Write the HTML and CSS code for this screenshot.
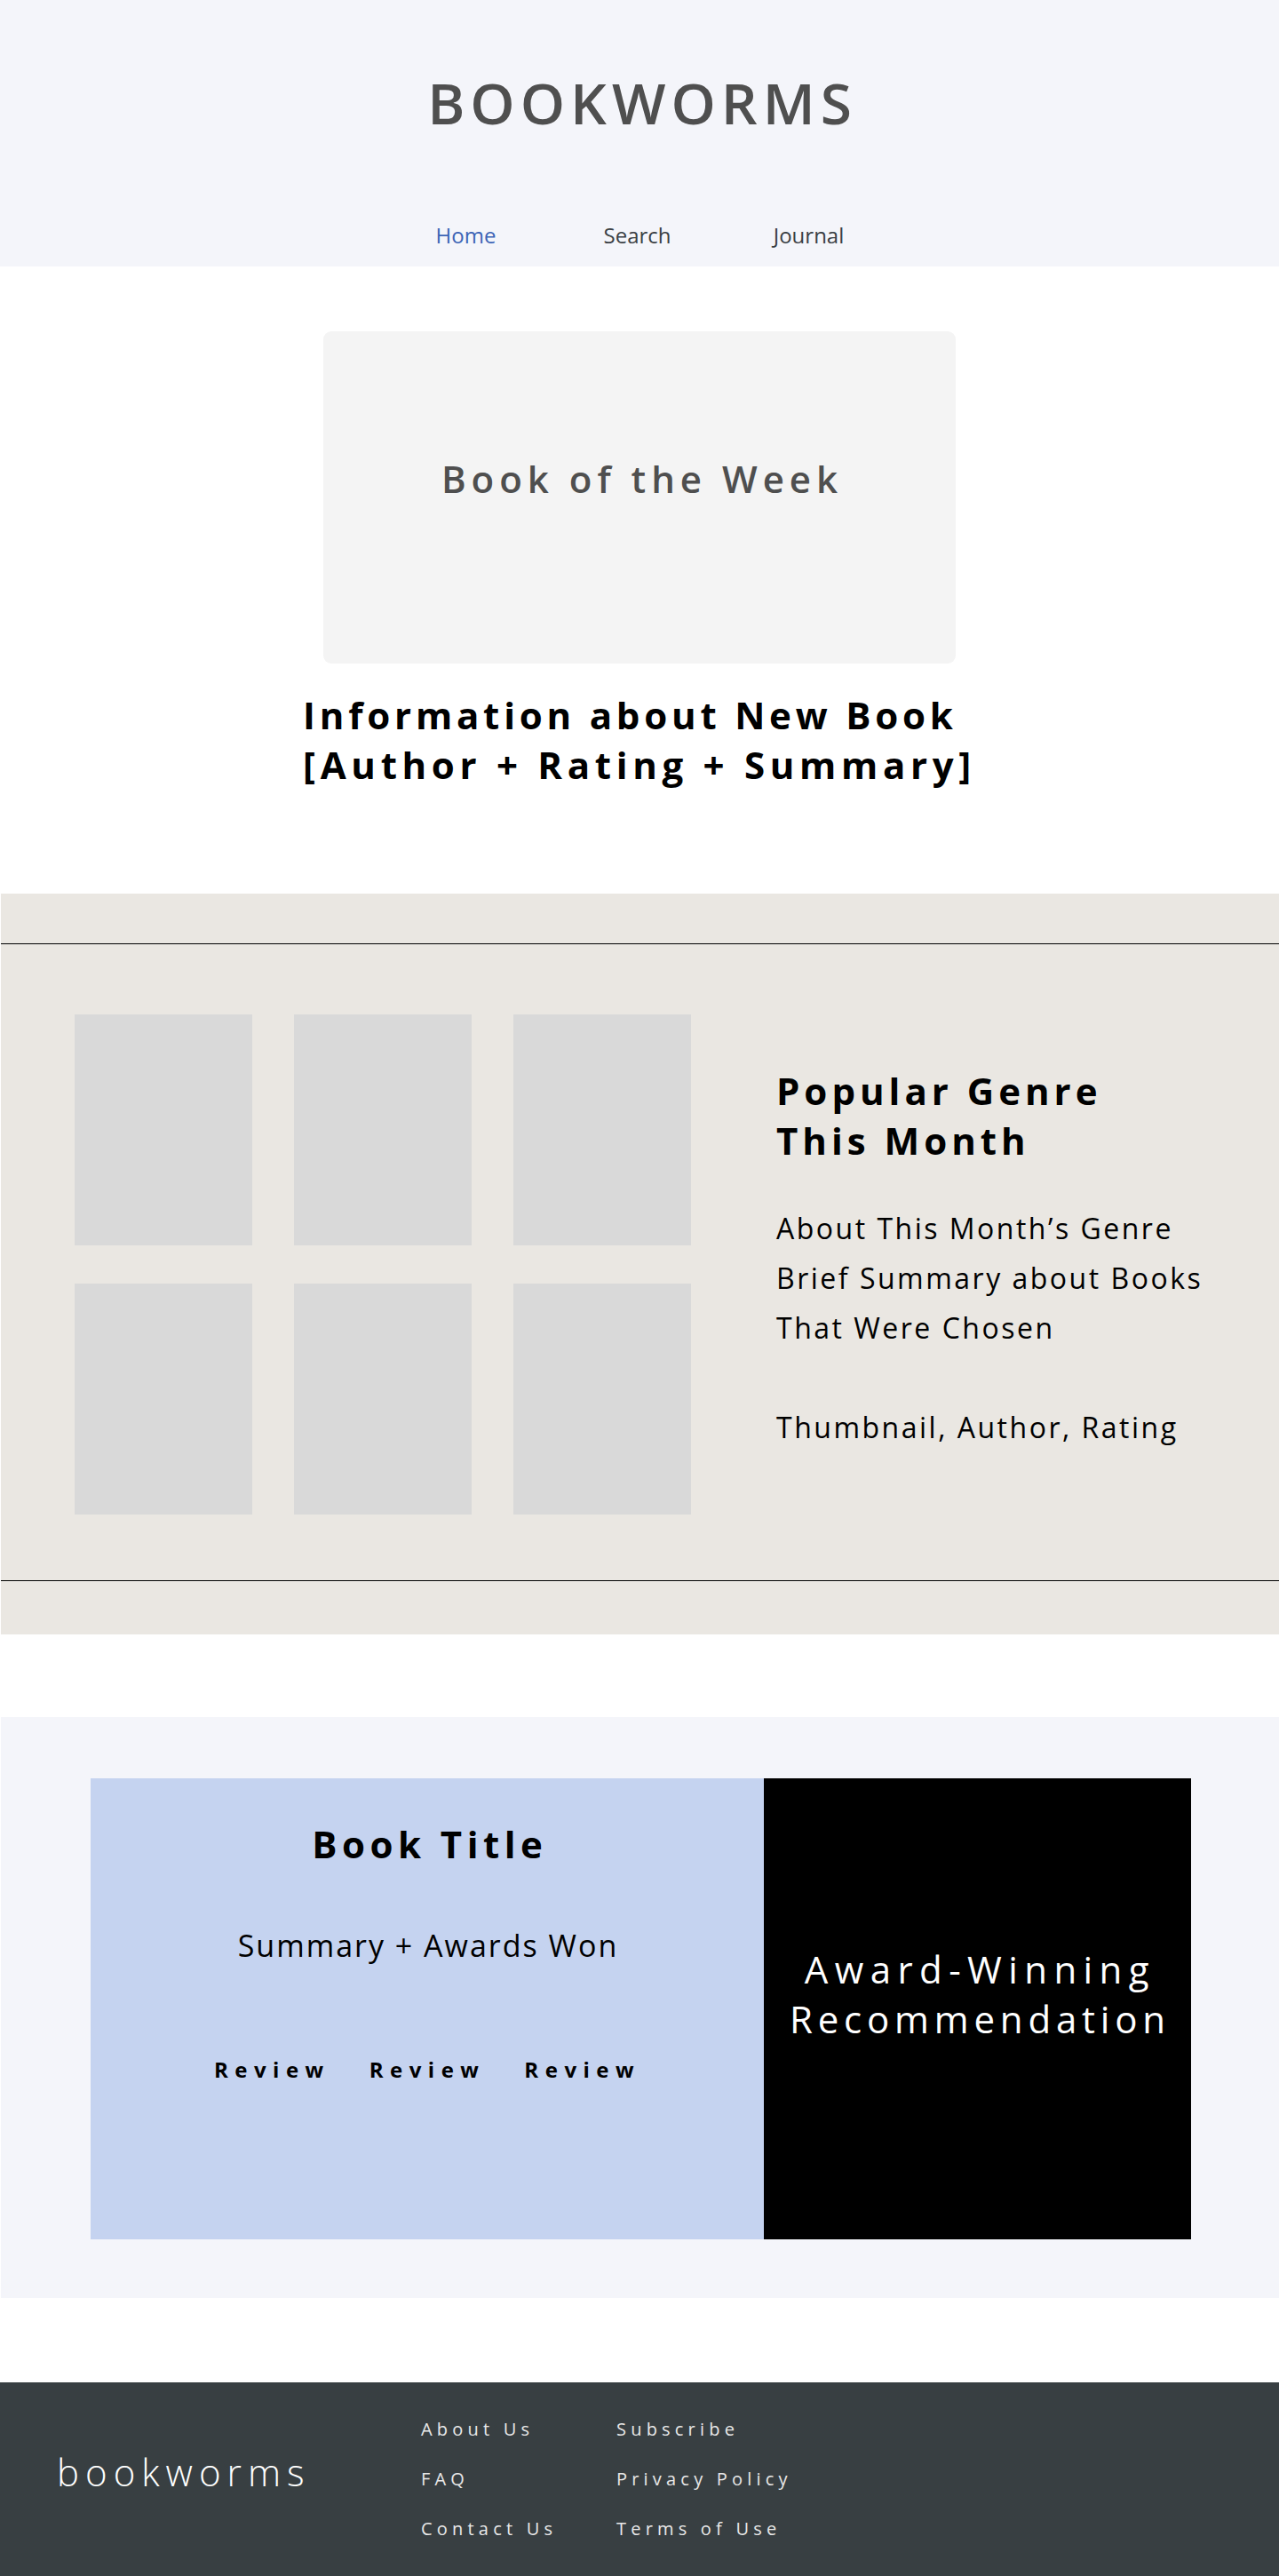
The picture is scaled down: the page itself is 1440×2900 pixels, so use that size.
FILE: index.html
```html
<!DOCTYPE html>
<html lang="en">
<head>
<meta charset="utf-8">
<title>Bookworms</title>
<link rel="stylesheet" href="styles.css">
</head>
<body>
<header class="site-header">
  <h1 class="brand">BOOKWORMS</h1>
  <nav class="main-nav">
    <a class="nav-link is-active" href="#">Home</a>
    <a class="nav-link" href="#">Search</a>
    <a class="nav-link" href="#">Journal</a>
  </nav>
</header>

<main>
  <section class="feature">
    <div class="feature-card">
      <h2 class="feature-title">Book of the Week</h2>
    </div>
    <p class="feature-info"><span class="feature-info-first">Information about New Book</span><br>[Author + Rating + Summary]</p>
  </section>

  <section class="genre">
    <div class="genre-inner">
      <div class="thumb-grid">
        <div class="thumb"></div>
        <div class="thumb"></div>
        <div class="thumb"></div>
        <div class="thumb"></div>
        <div class="thumb"></div>
        <div class="thumb"></div>
      </div>
      <div class="genre-text">
        <h2 class="genre-title">Popular Genre<br>This Month</h2>
        <p class="genre-body">About This Month’s Genre<br>Brief Summary about Books<br>That Were Chosen<br><br>Thumbnail, Author, Rating</p>
      </div>
    </div>
  </section>

  <section class="awards">
    <div class="awards-inner">
      <div class="award-book">
        <h2 class="award-book-title">Book Title</h2>
        <p class="award-summary">Summary + Awards Won</p>
        <div class="review-row">
          <span class="review">Review</span>
          <span class="review">Review</span>
          <span class="review">Review</span>
        </div>
      </div>
      <div class="award-banner">
        <p class="award-banner-text"><span class="award-banner-first">Award-Winning</span><br>Recommendation</p>
      </div>
    </div>
  </section>
</main>

<footer class="site-footer">
  <div class="footer-logo">bookworms</div>
  <ul class="footer-col">
    <li><a href="#">About Us</a></li>
    <li><a href="#">FAQ</a></li>
    <li><a href="#">Contact Us</a></li>
  </ul>
  <ul class="footer-col">
    <li><a href="#">Subscribe</a></li>
    <li><a href="#">Privacy Policy</a></li>
    <li><a href="#">Terms of Use</a></li>
  </ul>
</footer>
</body>
</html>
```

FILE: styles.css
```css
* {
  box-sizing: border-box;
}

body {
  margin: 0;
  background: #ffffff;
  font-family: "Open Sans", "Noto Sans", "Liberation Sans", sans-serif;
  color: #000000;
}

a {
  text-decoration: none;
  color: inherit;
}

/* Header */
.site-header {
  height: 300px;
  background: #f4f5fa;
  padding-top: 84px;
}

.brand {
  margin: 0;
  font-size: 64px;
  line-height: 64px;
  font-weight: 600;
  letter-spacing: 6px;
  padding-left: 6px;
  text-align: center;
  color: #4f4f4f;
}

.main-nav {
  margin-top: 105px;
  display: flex;
  justify-content: center;
  padding-right: 5px;
}

.nav-link {
  width: 193px;
  text-align: center;
  font-size: 24px;
  line-height: 24px;
  color: #3a3f44;
}

.nav-link.is-active {
  color: #3c64b6;
}

/* Book of the week */
.feature {
  padding: 73px 0 117px;
}

.feature-card {
  width: 712px;
  height: 374px;
  margin: 0 auto;
  background: #f4f4f4;
  border-radius: 9px;
  padding-top: 145px;
}

.feature-title {
  margin: 0;
  font-size: 42px;
  line-height: 42px;
  font-weight: 600;
  letter-spacing: 6px;
  padding-left: 6px;
  text-align: center;
  color: #4f4f4f;
}

.feature-info {
  width: fit-content;
  margin: 30px auto 0;
  font-size: 42px;
  line-height: 56px;
  font-weight: 700;
  letter-spacing: 5.7px;
  color: #000000;
}

.feature-info-first {
  letter-spacing: 4.8px;
}

/* Popular genre */
.genre {
  margin-left: 1px;
  background: #eae7e2;
  padding: 56px 0 60px;
}

.genre-inner {
  border-top: 1px solid #000000;
  border-bottom: 1px solid #000000;
  padding: 79px 0 74px 83px;
  display: flex;
  align-items: flex-start;
}

.thumb-grid {
  display: grid;
  grid-template-columns: repeat(3, 200px);
  grid-template-rows: repeat(2, 260px);
  column-gap: 47px;
  row-gap: 43px;
}

.thumb {
  background: #d9d9d9;
}

.genre-text {
  margin-left: 96px;
  margin-top: 58px;
}

.genre-title {
  margin: 0 0 43px;
  font-size: 42px;
  line-height: 56px;
  font-weight: 700;
  letter-spacing: 5px;
}

.genre-body {
  margin: 0;
  font-size: 32px;
  line-height: 56px;
  font-weight: 400;
  letter-spacing: 2.5px;
}

/* Awards */
.awards {
  margin: 93px 0 0 1px;
  background: #f4f5fa;
  padding: 69px 99px 66px 101px;
}

.awards-inner {
  display: flex;
  height: 519px;
}

.award-book {
  width: 758px;
  background: #c5d3f0;
  padding-top: 46px;
  text-align: center;
}

.award-book-title {
  margin: 0;
  font-size: 42px;
  line-height: 56px;
  font-weight: 700;
  letter-spacing: 5.5px;
  padding-left: 5.5px;
}

.award-summary {
  margin: 58px 0 0;
  font-size: 34px;
  line-height: 56px;
  font-weight: 400;
  letter-spacing: 2px;
  padding-left: 2px;
}

.review-row {
  margin-top: 96px;
  display: flex;
  justify-content: center;
  gap: 44px;
}

.review {
  font-size: 24px;
  line-height: 32px;
  font-weight: 700;
  letter-spacing: 7.5px;
}

.award-banner {
  width: 481px;
  background: #000000;
  padding-top: 187px;
}

.award-banner-text {
  margin: 0;
  color: #ffffff;
  font-size: 42px;
  line-height: 56px;
  font-weight: 400;
  letter-spacing: 5.8px;
  padding-left: 5.8px;
  text-align: center;
}

.award-banner-first {
  letter-spacing: 7.4px;
}

/* Footer */
.site-footer {
  margin-top: 95px;
  height: 218px;
  background: #383f42;
  padding: 25px 0 25px 64px;
  display: flex;
  align-items: flex-start;
}

.footer-logo {
  width: 410px;
  margin-top: 48px;
  font-size: 42px;
  line-height: 56px;
  font-weight: 300;
  letter-spacing: 7px;
  color: #ffffff;
}

.footer-col {
  list-style: none;
  margin: 0;
  padding: 0;
  width: 220px;
}

.footer-col li {
  font-size: 20px;
  line-height: 56px;
  letter-spacing: 5.2px;
  color: #e8e8e8;
}
```
